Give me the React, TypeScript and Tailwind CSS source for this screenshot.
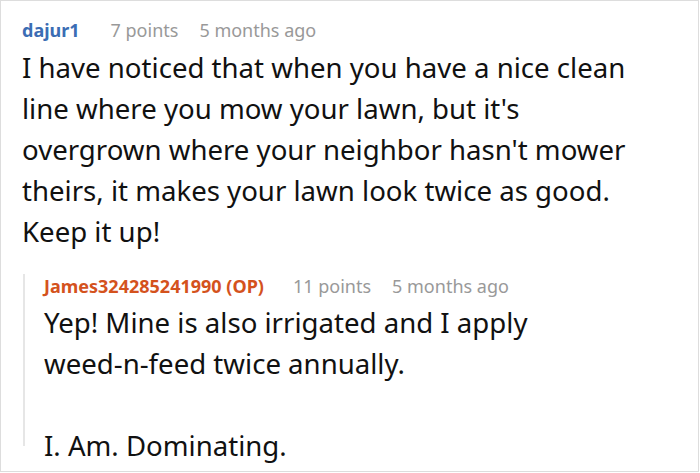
const font = { fontFamily: '"Noto Sans", "Open Sans", sans-serif' };

function Meta({ user, color, points, age, gap }: { user: string; color: string; points: string; age: string; gap: string }) {
  return (
    <div className="flex items-baseline text-[18px] leading-[24px]">
      <span className={`font-bold ${color}`}>{user}</span>
      <span className={`${gap} text-[#999999]`}>{points}</span>
      <span className="ml-[21px] text-[#999999]">{age}</span>
    </div>
  );
}

export default function App() {
  return (
    <div className="w-[700px] h-[473px] bg-white" style={font}>
      <div className="w-[699px] h-[472px] border border-[#dddddd] pl-[21px] pt-[17px]">
        <Meta user="dajur1" color="text-[#3b6db4]" points="7 points" age="5 months ago" gap="ml-[31px]" />
        <p className="mt-[5px] text-[27.6px] leading-[41px] text-[#111111] whitespace-nowrap">
          I have noticed that when you have a nice clean
          <br />
          line where you mow your lawn, but it's
          <br />
          overgrown where your neighbor hasn't mower
          <br />
          theirs, it makes your lawn look twice as good.
          <br />
          Keep it up!
        </p>
        <div className="mt-[22px] ml-[1px] border-l-2 border-[#e6e6e6] pl-[19px] h-[172px]">
          <Meta user="James324285241990 (OP)" color="text-[#d4521d]" points="11 points" age="5 months ago" gap="ml-[29px]" />
          <div className="mt-[4px] text-[27.6px] leading-[41px] text-[#111111] whitespace-nowrap">
            <p>
              Yep! Mine is also irrigated and I apply
              <br />
              weed-n-feed twice annually.
            </p>
            <p className="mt-[41px]">I. Am. Dominating.</p>
          </div>
        </div>
      </div>
    </div>
  );
}
